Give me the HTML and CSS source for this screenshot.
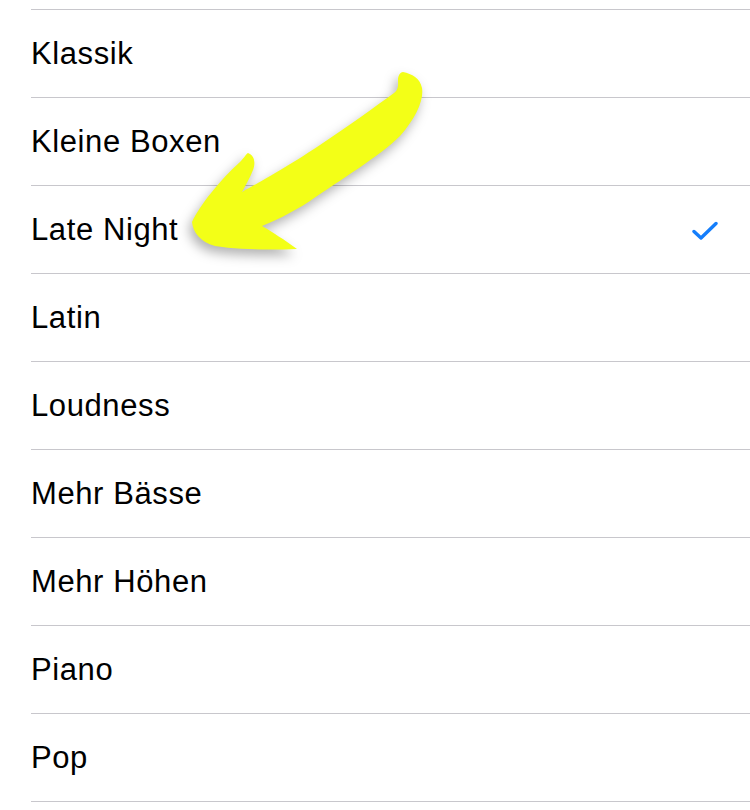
FILE: index.html
```html
<!DOCTYPE html>
<html lang="de">
<head>
<meta charset="utf-8">
<title>Equalizer</title>
<link rel="stylesheet" href="styles.css">
</head>
<body>
<div class="page">
  <ul class="list">
    <li class="row"><span class="label">Klassik</span></li>
    <li class="row"><span class="label">Kleine Boxen</span></li>
    <li class="row"><span class="label">Late Night</span>
      <svg class="check" viewBox="0 0 26 20" width="26" height="20" aria-hidden="true">
        <path d="M2 10.5 L9 17 L24 2.5" fill="none" stroke="#157efb" stroke-width="3.4" stroke-linecap="round" stroke-linejoin="round"/>
      </svg>
    </li>
    <li class="row"><span class="label">Latin</span></li>
    <li class="row"><span class="label">Loudness</span></li>
    <li class="row"><span class="label">Mehr Bässe</span></li>
    <li class="row"><span class="label">Mehr Höhen</span></li>
    <li class="row"><span class="label">Piano</span></li>
    <li class="row"><span class="label">Pop</span></li>
  </ul>
  <svg class="arrow" viewBox="0 0 750 810" width="750" height="810" aria-hidden="true">
    <path fill="#f3ff17" d="M403 72
      C412 74 420 78 422 88
      C424 100 416 118 400 136
      C380 156 340 180 310 201
      C290 214 272 222 262 226
      C272 232 285 240 297 249
      C270 250 240 250 215 246
      C200 242 193 232 192 222
      C200 205 220 180 240 162
      C244 158 246 154 248 153
      C254 155 256 162 253 170
      C250 178 245 186 242 192
      C260 182 290 165 320 145
      C350 125 376 106 394 93
      C399 89 398 84 398 80
      C398 76 400 72 403 72 Z"/>
  </svg>
</div>
</body>
</html>
```

FILE: styles.css
```css
html, body {
  margin: 0;
  padding: 0;
  background: #ffffff;
}

.page {
  position: relative;
  width: 750px;
  height: 810px;
  overflow: hidden;
  font-family: "Liberation Sans", Arial, sans-serif;
}

.list {
  list-style: none;
  margin: 9px 0 0 0;
  padding: 0;
}

.row {
  margin-left: 31px;
  border-top: 1px solid #c8c7cc;
  display: flex;
  align-items: center;
  justify-content: space-between;
  padding-right: 32px;
  box-sizing: content-box;
  height: 87px;
}

.row:last-child {
  border-bottom: 1px solid #c8c7cc;
}

.label {
  font-size: 31px;
  letter-spacing: 0.6px;
  color: #000000;
}

.check {
  display: block;
  margin-top: 2px;
}

.arrow {
  position: absolute;
  left: 0;
  top: 0;
  filter: drop-shadow(-3px 6px 6px rgba(0, 0, 0, 0.3));
  pointer-events: none;
}
```
